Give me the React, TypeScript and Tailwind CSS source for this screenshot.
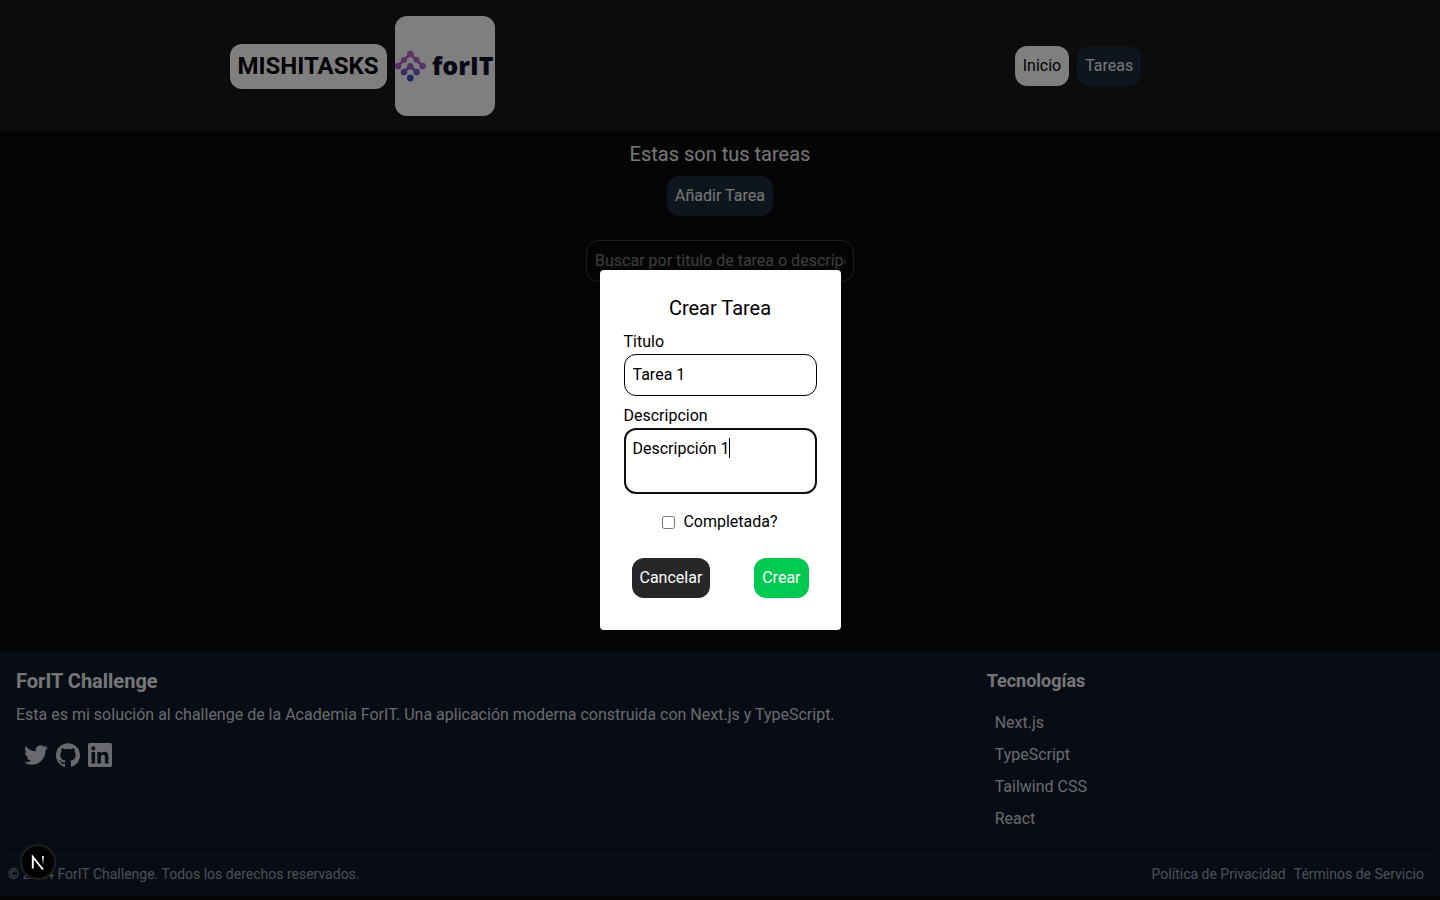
import { useEffect, useRef } from 'react';

const technologies = ['Next.js', 'TypeScript', 'Tailwind CSS', 'React'];

const socialLinks = [
  {
    name: 'Twitter',
    href: '#twitter',
    path: 'M23.953 4.57a10 10 0 01-2.825.775 4.958 4.958 0 002.163-2.723c-.951.555-2.005.959-3.127 1.184a4.92 4.92 0 00-8.384 4.482C7.69 8.095 4.067 6.13 1.64 3.162a4.822 4.822 0 00-.666 2.475c0 1.71.87 3.213 2.188 4.096a4.904 4.904 0 01-2.228-.616v.06a4.923 4.923 0 003.946 4.827 4.996 4.996 0 01-2.212.085 4.936 4.936 0 004.604 3.417 9.867 9.867 0 01-6.102 2.105c-.39 0-.779-.023-1.17-.067a13.995 13.995 0 007.557 2.209c9.053 0 13.998-7.496 13.998-13.985 0-.21 0-.42-.015-.63A9.935 9.935 0 0024 4.59z',
  },
  {
    name: 'GitHub',
    href: '#github',
    path: 'M12 .297c-6.63 0-12 5.373-12 12 0 5.303 3.438 9.8 8.205 11.385.6.113.82-.258.82-.577 0-.285-.01-1.04-.015-2.04-3.338.724-4.042-1.61-4.042-1.61C4.422 18.07 3.633 17.7 3.633 17.7c-1.087-.744.084-.729.084-.729 1.205.084 1.838 1.236 1.838 1.236 1.07 1.835 2.809 1.305 3.495.998.108-.776.417-1.305.76-1.605-2.665-.3-5.466-1.332-5.466-5.93 0-1.31.465-2.38 1.235-3.22-.135-.303-.54-1.523.105-3.176 0 0 1.005-.322 3.3 1.23.96-.267 1.98-.399 3-.405 1.02.006 2.04.138 3 .405 2.28-1.552 3.285-1.23 3.285-1.23.645 1.653.24 2.873.12 3.176.765.84 1.23 1.91 1.23 3.22 0 4.61-2.805 5.625-5.475 5.92.42.36.81 1.096.81 2.22 0 1.606-.015 2.896-.015 3.286 0 .315.21.69.825.57C20.565 22.092 24 17.592 24 12.297c0-6.627-5.373-12-12-12',
  },
  {
    name: 'LinkedIn',
    href: '#linkedin',
    path: 'M20.447 20.452h-3.554v-5.569c0-1.328-.027-3.037-1.852-3.037-1.853 0-2.136 1.445-2.136 2.939v5.667H9.351V9h3.414v1.561h.046c.477-.9 1.637-1.85 3.37-1.85 3.601 0 4.267 2.37 4.267 5.455v6.286zM5.337 7.433a2.062 2.062 0 01-2.063-2.065 2.064 2.064 0 112.063 2.065zm1.782 13.019H3.555V9h3.564v11.452zM22.225 0H1.771C.792 0 0 .774 0 1.729v20.542C0 23.227.792 24 1.771 24h20.451C23.2 24 24 23.227 24 22.271V1.729C24 .774 23.2 0 22.222 0h.003z',
  },
];

function ForItLogo() {
  return (
    <svg viewBox="0 0 100 100" className="size-25 rounded-xl bg-white" role="img" aria-label="forIT">
      <defs>
        <linearGradient id="dots" x1="0" y1="36" x2="0" y2="65" gradientUnits="userSpaceOnUse">
          <stop offset="0" stopColor="#c266c9" />
          <stop offset="0.5" stopColor="#a566d0" />
          <stop offset="0.75" stopColor="#6258c4" />
          <stop offset="1" stopColor="#1859b8" />
        </linearGradient>
      </defs>
      <g fill="url(#dots)">
        <circle cx="15.3" cy="38" r="3.2" />
        <circle cx="9" cy="44" r="3" />
        <circle cx="21.6" cy="44" r="3" />
        <circle cx="3" cy="50" r="3.2" />
        <circle cx="27.6" cy="50" r="3.2" />
        <circle cx="15.3" cy="50.2" r="3.2" />
        <circle cx="9" cy="56" r="3.2" />
        <circle cx="21.6" cy="56" r="3.2" />
        <circle cx="15.3" cy="62" r="3.4" />
      </g>
      <path d="M3 50 15.3 38 27.6 50M9 56 15.3 50.2 21.6 56" fill="none" stroke="url(#dots)" strokeWidth="3" />
      <text x="37" y="58.5" fontFamily="Open Sans, sans-serif" fontWeight="800" fontSize="25" fill="#130f2b">
        forIT
      </text>
    </svg>
  );
}

function Navbar() {
  return (
    <nav className="grid grid-cols-2 items-center bg-zinc-900 px-1 py-4">
      <div className="flex items-center justify-center gap-2">
        <h1 className="rounded-xl bg-white p-2 text-2xl leading-[29px] font-bold text-black">MISHITASKS</h1>
        <ForItLogo />
      </div>
      <div className="flex items-center justify-center gap-2">
        <a href="#inicio" className="rounded-xl bg-white p-2 text-black">Inicio</a>
        <a href="#tareas" className="rounded-xl bg-[#1c2a3a] p-2">Tareas</a>
      </div>
    </nav>
  );
}

function Footer() {
  return (
    <footer className="mb-1 bg-gray-900 px-2 pt-2 pb-3">
      <div className="grid grid-cols-3 gap-8">
        <section className="col-span-2 flex flex-col gap-2 p-2">
          <h2 className="text-xl font-bold">ForIT Challenge</h2>
          <p className="text-gray-300">
            Esta es mi solución al challenge de la Academia ForIT. Una aplicación moderna construida con Next.js y TypeScript.
          </p>
          <div className="flex gap-2 p-2 text-gray-300">
            {socialLinks.map(({ name, href, path }) => (
              <a key={name} href={href} aria-label={name}>
                <svg viewBox="0 0 24 24" className="size-6" fill="currentColor" aria-hidden="true">
                  <path d={path} />
                </svg>
              </a>
            ))}
          </div>
        </section>
        <section className="flex flex-col gap-4 p-2">
          <h3 className="text-lg leading-7 font-bold">Tecnologías</h3>
          <ul className="flex flex-col gap-2 px-2 text-gray-300">
            {technologies.map((name) => (
              <li key={name}>{name}</li>
            ))}
          </ul>
        </section>
      </div>
      <div className="mt-4 flex justify-between border-t border-gray-800 pt-2 text-sm text-gray-400">
        <p>© 2024 ForIT Challenge. Todos los derechos reservados.</p>
        <div className="flex gap-2 pr-2">
          <a href="#privacidad">Política de Privacidad</a>
          <a href="#terminos">Términos de Servicio</a>
        </div>
      </div>
    </footer>
  );
}

function CreateTaskDialog() {
  const description = useRef<HTMLTextAreaElement>(null);

  useEffect(() => {
    const field = description.current;
    if (!field) return;
    field.focus();
    field.setSelectionRange(field.value.length, field.value.length);
  }, []);

  return (
    <div className="fixed inset-0 flex items-center justify-center bg-black/50">
      <form role="dialog" aria-labelledby="dialog-title" className="flex flex-col rounded bg-white p-6 text-black">
        <h2 id="dialog-title" className="mb-2 text-center text-xl">Crear Tarea</h2>
        <label htmlFor="title">Titulo</label>
        <input id="title" defaultValue="Tarea 1" className="mb-2 w-[193px] rounded-xl border border-black p-2" />
        <label htmlFor="description">Descripcion</label>
        <div className="relative mb-4 flex">
          <textarea
            id="description"
            ref={description}
            rows={2}
            defaultValue="Descripción 1"
            className="w-[193px] resize-none rounded-xl border-2 border-[#101010] p-[7px] caret-transparent outline-none"
          />
          <span aria-hidden="true" className="pointer-events-none absolute top-2.5 left-[105px] h-5 w-px bg-black" />
        </div>
        <div className="flex items-center justify-center gap-2">
          <input id="completed" type="checkbox" />
          <label htmlFor="completed">Completada?</label>
        </div>
        <div className="mt-4 flex justify-between p-2">
          <button type="button" className="rounded-xl bg-zinc-800 p-2 text-white">Cancelar</button>
          <button type="submit" className="rounded-xl bg-green-500 p-2 text-white">Crear</button>
        </div>
      </form>
    </div>
  );
}

export default function App() {
  return (
    <div className="flex min-h-screen flex-col bg-[#0a0a0a] font-[Roboto,sans-serif] text-base text-[#ededed]">
      <Navbar />
      <main className="flex grow flex-col items-center gap-2 p-2">
        <h2 className="text-xl">Estas son tus tareas</h2>
        <button type="button" className="rounded-xl bg-[#1c2a3a] p-2">Añadir Tarea</button>
        <input
          type="text"
          aria-label="Buscar tareas"
          placeholder="Buscar por titulo de tarea o descripcion"
          className="mt-4 w-67 rounded-xl border border-zinc-700 p-2"
        />
      </main>
      <Footer />
      <CreateTaskDialog />
      <button
        type="button"
        aria-label="Next.js"
        className="fixed bottom-5 left-5 flex size-9 items-center justify-center rounded-full border-2 border-[#1e1e1e] bg-black"
      >
        <svg viewBox="0 0 40 40" className="size-10 shrink-0" fill="none" aria-hidden="true">
          <defs>
            <linearGradient id="stem" x1="0" y1="14" x2="0" y2="23" gradientUnits="userSpaceOnUse">
              <stop stopColor="#fff" />
              <stop offset="1" stopColor="#fff" stopOpacity="0" />
            </linearGradient>
          </defs>
          <path d="M14.8 26.5V15L25 27.5" stroke="#fff" strokeWidth="1.9" />
          <path d="M25 14V23" stroke="url(#stem)" strokeWidth="1.8" />
        </svg>
      </button>
    </div>
  );
}
